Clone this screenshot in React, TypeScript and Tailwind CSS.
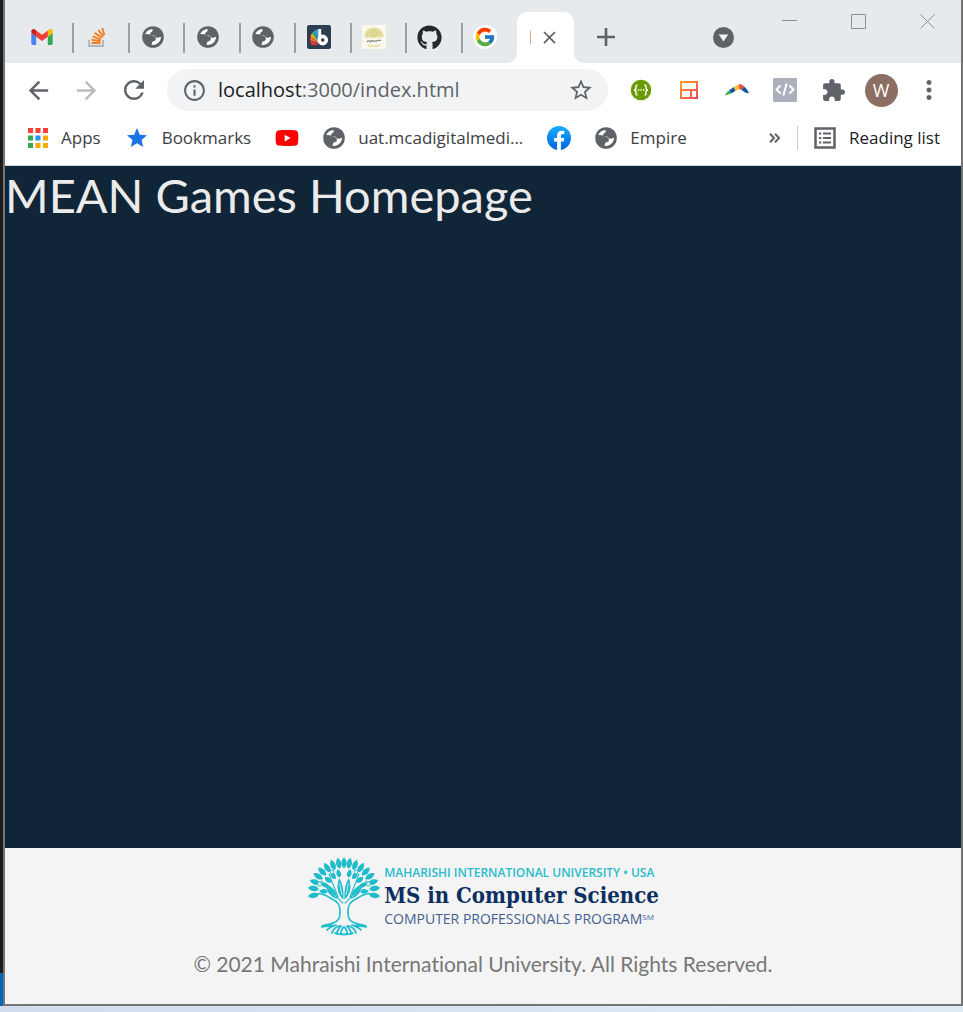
import type { ReactNode } from "react";
import { FcGoogle } from "react-icons/fc";
import { FaGithub, FaYoutube } from "react-icons/fa";
import {
  MdArrowBack,
  MdArrowForward,
  MdClose,
  MdExtension,
  MdInfoOutline,
  MdMoreVert,
  MdRefresh,
  MdStar,
  MdStarBorder,
} from "react-icons/md";

function GmailIcon() {
  return (
    <svg viewBox="52 42 88 66" className="h-4 w-[22px]" aria-hidden="true">
      <path fill="#4285f4" d="M58 108h14V74L52 59v43c0 3.32 2.69 6 6 6" />
      <path fill="#34a853" d="M120 108h14c3.32 0 6-2.69 6-6V59l-20 15" />
      <path fill="#fbbc04" d="M120 48v26l20-15v-8c0-7.42-8.47-11.65-14.4-7.2" />
      <path fill="#ea4335" d="M72 74V48l24 18 24-18v26L96 92" />
      <path fill="#c5221f" d="M52 51v8l20 15V48l-5.6-4.2c-5.94-4.45-14.4-.22-14.4 7.2" />
    </svg>
  );
}

function StackIcon() {
  return (
    <svg viewBox="0 0 18 20" className="h-5 w-[18px]" aria-hidden="true">
      <path d="M1 13v6h14v-6" fill="none" stroke="#b0b5b9" strokeWidth="1.8" />
      <g stroke="#f48024" strokeWidth="2">
        <path d="M3.5 16h9" />
        <path d="M3.7 12.8l8.8 1.500" />
        <path d="M4.6 9.400l8.300 3.200" />
        <path d="M6.700 5.800l7.400 5" />
        <path d="M10.200 2.800l5.300 6.700" />
        <path d="M14.300 1l2 7" />
      </g>
    </svg>
  );
}

function GlobeIcon() {
  return (
    <svg viewBox="0 0 22 22" className="size-[22px]" aria-hidden="true">
      <circle cx="11" cy="11" r="10.800" fill="#5f6368" />
      <path
        fill="#fff"
        d="M10.500 3C7 3.200 4.500 5 3.300 8L7 8.300c1.500.1 2 1.400 3.600 1.500 2.600.1 4 2.200 3 4.200-.7 1.200-2.500 1-3.300 2-.6.8-.2 1.700-.8 2.800 5.200.8 9.300-3 9.500-7.800-1.500-.3-2.200.9-4 .7-1.600-.2-1.700-1.600-3.100-2.100-1.400-.4-2.600.3-3.500-.8-.9-1.200.2-2.200 1.100-2.800.9-.6 1.400-1.600 1-3z"
      />
    </svg>
  );
}

function BrandIcon() {
  return (
    <svg viewBox="0 0 24 24" className="size-6" aria-hidden="true">
      <rect width="24" height="24" rx="2" fill="#2c3e50" />
      <path fill="#2d9cdb" d="M7.500 5.500L11 4v12z" />
      <path fill="#27ae8f" d="M5 8l2.500-2.500L11 17z" />
      <path fill="#f9a825" d="M3.500 11.500L5 8l7 10z" />
      <path fill="#fb6b35" d="M3 15l.5-3.500L12 19z" />
      <path fill="#e53935" d="M4 19l-1-4 9 5H5z" />
      <path d="M12.700 4v11.500" stroke="#fff" strokeWidth="3" />
      <circle cx="15.700" cy="15" r="3.600" fill="#2c3e50" stroke="#fff" strokeWidth="3.600" />
    </svg>
  );
}

function GoldTreeIcon() {
  return (
    <svg viewBox="0 0 24 24" className="size-6" aria-hidden="true">
      <rect width="24" height="24" fill="#fbf9ee" />
      <path d="M12 2.500c5.500 0 9.500 4 9.500 9.500-3 1.500-6.500-.5-9.500 1-3-1.500-6.500.5-9.500-1 0-5.500 4-9.500 9.500-9.500z" fill="#e6dc9c" />
      <path d="M5 10l3-4M9 11l1-6M12 13V4M15 11l-1-6M19 10l-3-4" stroke="#cdbf68" strokeWidth=".8" strokeDasharray="1.500 1" />
      <path d="M5 17c1-2 2-2 3 0 1-2 2-1.500 3-.5 1-1 2-1 3 0 1-1.500 2-1.500 5-1" fill="none" stroke="#7d857b" strokeWidth="1.100" />
      <path d="M6 20c3 1.500 9 1.500 12 0" fill="none" stroke="#e6dc9c" strokeWidth="1.500" />
    </svg>
  );
}

function FacebookIcon() {
  return (
    <svg viewBox="0 0 24 24" className="size-6" aria-hidden="true">
      <defs>
        <linearGradient id="fb" x1="0" y1="0" x2="0" y2="1">
          <stop offset="0" stopColor="#19afff" />
          <stop offset="1" stopColor="#0062e0" />
        </linearGradient>
      </defs>
      <circle cx="12" cy="12" r="12" fill="url(#fb)" />
      <path
        fill="#fff"
        d="M16.700 15.500l.5-3.500h-3.300V9.800c0-1 .5-1.900 1.900-1.900h1.500v-3s-1.400-.2-2.700-.2c-2.700 0-4.500 1.700-4.500 4.700V12H7.100v3.500h3v8.400a12 12 0 0 0 3.800 0v-8.400z"
      />
    </svg>
  );
}

function AppsIcon() {
  const dots: [number, number, string][] = [
    [0, 0, "#f44336"], [7.5, 0, "#f44336"], [15, 0, "#f44336"],
    [0, 7.5, "#34a853"], [7.5, 7.5, "#2196f3"], [15, 7.5, "#fbab00"],
    [0, 15, "#34a853"], [7.5, 15, "#fbab00"], [15, 15, "#fbab00"],
  ];
  return (
    <svg viewBox="0 0 20 20" className="size-5" aria-hidden="true">
      {dots.map(([x, y, fill]) => (
        <rect key={`${x}-${y}`} x={x} y={y} width="5" height="5" fill={fill} />
      ))}
    </svg>
  );
}

function BracesIcon() {
  return (
    <svg viewBox="0 0 22 22" className="size-[22px]" aria-hidden="true">
      <circle cx="11" cy="11" r="10.300" fill="#6a9a00" />
      <g fill="none" stroke="#fff" strokeWidth="1.400">
        <path d="M7.500 6C5.800 6 6 7 6 8.500S5.500 11 4 11c1.500 0 2 1 2 2.500S5.800 16 7.500 16" />
        <path d="M14.500 6c1.700 0 1.500 1 1.500 2.500s.5 2.500 2 2.500c-1.500 0-2 1-2 2.500s.2 2.500-1.500 2.500" />
      </g>
      <path d="M7.800 11h7" stroke="#fff" strokeWidth="1.500" strokeDasharray="1.500 1.100" />
    </svg>
  );
}

function LayoutIcon() {
  return (
    <svg viewBox="0 0 18 18" className="size-[18px]" aria-hidden="true">
      <defs>
        <linearGradient id="panel" x1="0" y1="0" x2="1" y2="1">
          <stop offset="0" stopColor="#ffa028" />
          <stop offset="1" stopColor="#f2455a" />
        </linearGradient>
      </defs>
      <path fill="none" stroke="url(#panel)" strokeWidth="2" d="M1 1h16v16H1zM1 9h16M11 9v8" />
    </svg>
  );
}

function ArcIcon() {
  return (
    <svg viewBox="0 0 24 12" className="h-3 w-6" aria-hidden="true">
      <path fill="#34a853" d="M0 11.500C1 9 2.500 7.500 4.500 6l1.500 3.500z" />
      <path fill="#0b57a4" d="M4.500 6L9 3l1.500 4L6 9.500z" />
      <path fill="#fbc02d" d="M9 3l4.500-2.500.5 4.500-3.500 2z" />
      <path fill="#f04e3e" d="M13.500.5c2.500-.8 4 0 5.500 2L16.500 6 14 5z" />
      <path fill="#0b57a4" d="M19 2.500c2.500 2 4 4 5 7-2.500-.3-5-1.500-7.500-3.500z" />
    </svg>
  );
}

function CodeIcon() {
  return (
    <svg viewBox="0 0 24 24" className="size-6" aria-hidden="true">
      <rect width="24" height="24" rx="1" fill="#aab0bc" />
      <path d="M7.500 7.500L3.500 11.500l4 4M16.500 7.500l4 4-4 4M13.700 5.500l-3.400 12" fill="none" stroke="#fff" strokeWidth="2" />
    </svg>
  );
}

function ReadingListIcon() {
  return (
    <svg viewBox="0 0 22 22" className="size-[22px]" fill="none" stroke="#5f6368" strokeWidth="2" aria-hidden="true">
      <path d="M1.500 1.500h19v19h-19z" strokeWidth="2.500" />
      <path d="M5 6.500h2.300M5 11h2.300M5 15.500h2.300M9 6.500h8M9 11h8M9 15.500h8" />
    </svg>
  );
}

const LEAF = "M0 0C4.200 -3 4 -7.500 0 -11.500C-4 -7.500 -4.200 -3 0 0Z";

function TreeLogo() {
  const outer = [-97, -83, -70, -57, -45, -33, -21, -10, 0, 10, 21, 33, 45, 57, 70, 83, 97];
  const middle = [-88, -69, -51, -32, -15, 15, 32, 51, 69, 88];
  const place = (deg: number, r: number) => {
    const a = (deg * Math.PI) / 180;
    return `translate(${37 + r * 1.08 * Math.sin(a)} ${35 - r * Math.cos(a)}) rotate(${deg})`;
  };
  return (
    <svg viewBox="0 0 74 80" className="h-20 w-[74px]" aria-hidden="true">
      <g fill="#1fbccb">
        {outer.map((d) => (
          <path key={d} d={LEAF} transform={`${place(d, 23.5)} scale(.85 .97)`} />
        ))}
        {middle.map((d) => (
          <path key={d} d={LEAF} transform={`${place(d, 15)} scale(.75)`} />
        ))}
        <path d="M36.300 43C29 35 30 28 32 21c4 6 5 13 4.300 22zM37.700 43c7.300-8 6.300-15 4.300-22-4 6-5 13-4.300 22z" />
        <path d="M30 42c-8-3-11-9-11-15 7 3 11 8 11 15zM44 42c8-3 11-9 11-15-7 3-11 8-11 15z" />
      </g>
      <g fill="none" stroke="#f4f4f4" strokeWidth=".8">
        <path d="M29 40l-8-10M45 40l8-10M35 38l-2.500-12M39 38l2.500-12" />
      </g>
      <g fill="none" stroke="#1fbccb" strokeWidth="1.600" strokeLinecap="round">
        <path d="M8 37c8-1 12 2 17 5 6 3 8 6 8 12 0 7-1 10-7 12-4 2-8 1-11 3" />
        <path d="M66 37c-8-1-12 2-17 5-6 3-8 6-8 12 0 7 1 10 7 12 4 2 8 1 11 3" />
        <path d="M36 46C29 40 24 32 14 24M38 46c7-6 12-14 22-22M31 40l-9-23M43 40l9-23" strokeWidth="1.100" />
        <path
          d="M15 70c4-2 7 0 10-2M20 73c3-4 6-4 9-5M25 76c1-4 4-6 7-7M30 77c0-3 2-6 4-8M34 77c0-3 0-5 3-7 3 2 3 4 3 7M44 77c0-3-2-6-4-8M49 76c-1-4-4-6-7-7M54 73c-3-4-6-4-9-5M59 70c-4-2-7 0-10-2M28 76c5 2 13 2 18 0"
          strokeWidth="1.800"
        />
      </g>
      <g fill="#f4f4f4" stroke="#1fbccb">
        <circle cx="25" cy="15" r="2" />
        <circle cx="49" cy="15" r="2" />
        <circle cx="12.500" cy="27" r="2" />
        <circle cx="61.500" cy="27" r="2" />
      </g>
    </svg>
  );
}

const pinnedTabs: { name: string; icon: ReactNode }[] = [
  { name: "Gmail", icon: <GmailIcon /> },
  { name: "Stack Overflow", icon: <StackIcon /> },
  { name: "Site 1", icon: <GlobeIcon /> },
  { name: "Site 2", icon: <GlobeIcon /> },
  { name: "Site 3", icon: <GlobeIcon /> },
  { name: "Brand", icon: <BrandIcon /> },
  { name: "ComPro", icon: <GoldTreeIcon /> },
  { name: "GitHub", icon: <FaGithub className="size-[25px] text-[#24292e]" /> },
  {
    name: "Google",
    icon: (
      <span className="grid size-6 place-items-center rounded-full bg-white">
        <FcGoogle className="size-[22px]" />
      </span>
    ),
  },
];

function TabStrip() {
  return (
    <div className="flex h-[63px] bg-[#e6eaed]">
      <ul className="ml-[14px] mt-[23px] grid h-[30px] w-[499px] shrink-0 grid-cols-9">
        {pinnedTabs.map((tab) => (
          <li key={tab.name} className="border-r-2 border-[#9b9fa3] pr-2 last:border-transparent">
            <button aria-label={tab.name} className="grid size-full place-items-center pb-[2px]">
              {tab.icon}
            </button>
          </li>
        ))}
      </ul>
      <div className="relative -ml-px mt-3 flex w-[57px] shrink-0 items-center rounded-t-[10px] bg-white pl-[13px]">
        <svg viewBox="0 0 10 10" className="absolute -left-[10px] bottom-0 size-[10px]" aria-hidden="true">
          <path d="M10 0v10H0A10 10 0 0 0 10 0z" fill="#fff" />
        </svg>
        <svg viewBox="0 0 10 10" className="absolute -right-[10px] bottom-0 size-[10px]" aria-hidden="true">
          <path d="M0 0v10h10A10 10 0 0 1 0 0z" fill="#fff" />
        </svg>
        <span className="h-[13px] w-px bg-[#dba794]" />
        <button aria-label="Close tab" className="ml-2 text-[#5f6368]">
          <MdClose className="size-[21px]" />
        </button>
      </div>
      <button aria-label="New tab" className="ml-[23px] mt-[11px] self-center">
        <svg viewBox="0 0 18 18" className="size-[18px]" stroke="#5f6368" strokeWidth="2.600" aria-hidden="true">
          <path d="M9 0v18M0 9h18" />
        </svg>
      </button>
      <div className="flex-1" />
      <button aria-label="Search tabs" className="mr-12 mt-[11px] self-center">
        <svg viewBox="0 0 21 21" className="size-[21px]" aria-hidden="true">
          <circle cx="10.500" cy="10.500" r="10.500" fill="#5f6368" />
          <path d="M5.700 7.500h9.600l-4.800 7z" fill="#f1f3f4" />
        </svg>
      </button>
      <div className="mr-[25px] mt-[14px] flex h-4 gap-[53px] text-[#8d9093]">
        <button aria-label="Minimize">
          <svg viewBox="0 0 16 16" className="size-4" stroke="currentColor">
            <path d="M0 6.500h15" />
          </svg>
        </button>
        <button aria-label="Maximize">
          <svg viewBox="0 0 16 16" className="size-4" fill="none" stroke="currentColor">
            <path d="M.5.5h14v14H.5z" />
          </svg>
        </button>
        <button aria-label="Close window">
          <svg viewBox="0 0 16 16" className="size-4" stroke="currentColor">
            <path d="M.5.5l14 14M14.500.5l-14 14" />
          </svg>
        </button>
      </div>
    </div>
  );
}

function ToolButton({ label, children }: { label: string; children: ReactNode }) {
  return (
    <button aria-label={label} className="grid h-12 w-12 shrink-0 place-items-center text-[#5f6368]">
      {children}
    </button>
  );
}

function Toolbar() {
  return (
    <div className="flex h-[54px] items-center pl-[9px] pr-2">
      <ToolButton label="Back"><MdArrowBack className="size-[29px]" /></ToolButton>
      <ToolButton label="Forward"><MdArrowForward className="size-[29px] text-[#babcbe]" /></ToolButton>
      <ToolButton label="Reload"><MdRefresh className="size-[30px]" /></ToolButton>
      <div className="mx-[9px] flex h-[42px] min-w-0 flex-1 items-center rounded-full bg-[#f1f3f4] pl-[15px] pr-[14px] text-[#5f6368]">
        <MdInfoOutline className="size-[25px] shrink-0" />
        <button aria-label="Address" className="ml-[11px] min-w-0 flex-1 truncate text-left text-[20px] leading-7">
          <span className="text-[#202124]">localhost</span>:3000/index.html
        </button>
        <button aria-label="Bookmark this page">
          <MdStarBorder className="size-[26px]" />
        </button>
      </div>
      <ToolButton label="API tools"><BracesIcon /></ToolButton>
      <ToolButton label="Layout tools"><LayoutIcon /></ToolButton>
      <ToolButton label="Arc"><ArcIcon /></ToolButton>
      <ToolButton label="Code tools"><CodeIcon /></ToolButton>
      <ToolButton label="Extensions"><MdExtension className="size-[25px]" /></ToolButton>
      <ToolButton label="Profile">
        <span className="grid size-[33px] place-items-center rounded-full bg-[#8d6e63] text-lg text-white">W</span>
      </ToolButton>
      <ToolButton label="Menu"><MdMoreVert className="size-[30px]" /></ToolButton>
    </div>
  );
}

function Bookmark({ icon, label, children }: { icon: ReactNode; label?: string; children?: ReactNode }) {
  return (
    <a href="#" aria-label={label} className="flex shrink-0 items-center gap-[13px]">
      {icon}
      {children}
    </a>
  );
}

function BookmarksBar() {
  return (
    <nav className="flex h-[49px] items-center border-b border-[#cfd4d8] pb-[6px] pl-[23px] pr-[21px] text-[17px] leading-6 text-[#3c4043]">
      <div className="flex items-center gap-6">
        <Bookmark icon={<AppsIcon />}>Apps</Bookmark>
        <Bookmark icon={<MdStar className="size-6 text-[#1a73e8]" />}>Bookmarks</Bookmark>
        <Bookmark icon={<FaYoutube className="size-6 text-[#f00]" />} label="YouTube" />
        <Bookmark icon={<GlobeIcon />}>uat.mcadigitalmedi...</Bookmark>
        <Bookmark icon={<FacebookIcon />} label="Facebook" />
        <Bookmark icon={<GlobeIcon />}>Empire</Bookmark>
      </div>
      <div className="flex-1" />
      <button aria-label="More bookmarks" className="mr-4">
        <svg viewBox="0 0 12 10" className="h-[10px] w-3" fill="none" stroke="#5f6368" strokeWidth="2" aria-hidden="true">
          <path d="M1 .8L5 5 1 9.200M6 .8L10 5 6 9.200" />
        </svg>
      </button>
      <div className="h-6 w-px bg-[#c8cbce]" />
      <button className="ml-4 flex items-center gap-[13px] text-[#202124]">
        <ReadingListIcon />
        Reading list
      </button>
    </nav>
  );
}

function Footer() {
  return (
    <footer className="flex h-[156px] flex-col items-center bg-[#f4f4f4] pt-[9px]">
      <div className="flex items-center gap-[3px]">
        <TreeLogo />
        <div className="flex flex-col whitespace-nowrap font-['Open_Sans',sans-serif]">
          <span className="text-[12px] leading-4 font-semibold text-[#29bccb]">MAHARISHI INTERNATIONAL UNIVERSITY • USA</span>
          <span className="font-['DejaVu_Serif_Condensed','DejaVu_Serif',serif] text-[22px] leading-7 font-bold text-[#0b2f60]">
            MS in Computer Science
          </span>
          <span className="text-[14px] leading-5 font-medium text-[#46618f]">
            COMPUTER PROFESSIONALS PROGRAM<sup className="text-[8px]">SM</sup>
          </span>
        </div>
      </div>
      <p className="mt-[11px] font-['Lato',sans-serif] text-[21px] leading-8 text-[#777] [font-variant-ligatures:none]">
        © 2021 Mahraishi International University. All Rights Reserved.
      </p>
    </footer>
  );
}

export default function App() {
  return (
    <div className="flex min-h-screen flex-col bg-[#d9e2f1] font-['Open_Sans',sans-serif]">
      <div className="flex flex-1">
        <div className="flex w-[3px] shrink-0 flex-col bg-[#1c1c1c]">
          <div className="flex-1" />
          <div className="h-[33px] bg-[#0068b8]" />
        </div>
        <div className="flex min-w-0 flex-1 flex-col border-x-2 border-b-2 border-[#757575] bg-white">
          <header>
            <TabStrip />
            <Toolbar />
            <BookmarksBar />
          </header>
          <main className="flex-1 bg-[#102537]">
            <h1 className="font-['Lato',sans-serif] text-[47px] leading-[58px] text-[#ebebeb]">MEAN Games Homepage</h1>
          </main>
          <Footer />
        </div>
      </div>
      <div className="h-[6px] shrink-0 bg-linear-to-r from-[#d3dbf0] to-[#dfeaf5]" />
    </div>
  );
}
